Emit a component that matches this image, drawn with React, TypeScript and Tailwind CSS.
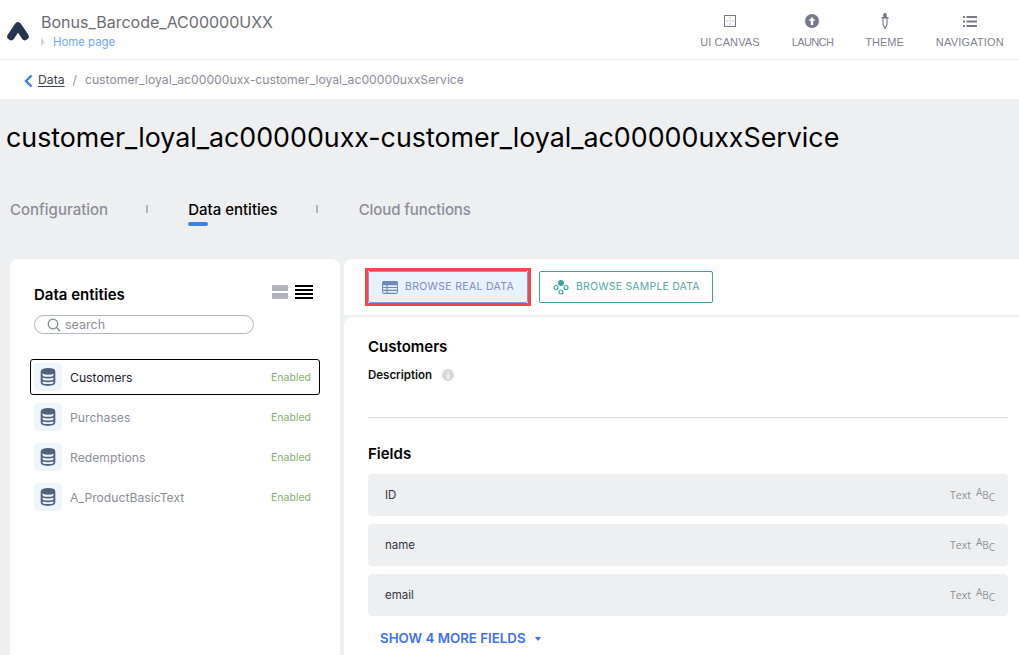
import React from "react";

const font = { fontFamily: "Inter, 'Liberation Sans', sans-serif" };

function Db() {
  return (
    <svg width="16" height="18" viewBox="0 0 16 18" fill="none" stroke="#52617c" strokeWidth="1.8">
      <ellipse cx="8" cy="3.4" rx="6.4" ry="2.4" fill="#52617c" />
      <path d="M1.6 3.4v11.2c0 1.4 2.9 2.4 6.4 2.4s6.4-1 6.4-2.4V3.4" />
      <path d="M1.6 7.2c0 1.4 2.9 2.4 6.4 2.4s6.4-1 6.4-2.4M1.6 11c0 1.4 2.9 2.4 6.4 2.4s6.4-1 6.4-2.4" />
    </svg>
  );
}

function Entity({ name, active }: { name: string; active?: boolean }) {
  return (
    <div className={`flex h-[36px] items-center rounded-[3px] border pl-[3px] pr-[8px] ${active ? "border-black" : "border-transparent"}`}>
      <div className="flex h-[28px] w-[28px] items-center justify-center rounded-[4px] bg-[#eef6fd]">
        <Db />
      </div>
      <span className={`ml-[8px] flex-1 pt-[2px] text-[12.2px] ${active ? "text-[#1c2130]" : "text-[#8b8e98]"}`}>{name}</span>
      <span className="pt-[2px] text-[10.5px] text-[#84b06a]">Enabled</span>
    </div>
  );
}

function Field({ name }: { name: string }) {
  return (
    <div className="flex h-[42px] items-center rounded-[4px] bg-[#eeeff1] pl-[17px] pr-[13px]">
      <span className="flex-1 pt-[2px] text-[11.5px] text-[#33363f]">{name}</span>
      <span className="pt-[2px] text-[10.5px] text-[#8f8f8f]" style={{ fontFamily: "'Open Sans', sans-serif" }}>Text</span>
      <span className="ml-[5px] flex items-start text-[#8f939c]" style={{ fontFamily: "'Open Sans', sans-serif" }}>
        <span className="text-[10px] leading-[12px] -translate-y-[3px]">A</span>
        <span className="text-[10px] leading-[12px]">B</span>
        <span className="text-[10px] leading-[12px] translate-y-[2px]">C</span>
      </span>
    </div>
  );
}

function NavItem({ label, icon, track }: { label: string; icon: React.ReactNode; track: string }) {
  return (
    <div className="flex flex-col items-center">
      <div className="flex h-[20px] items-center justify-center">{icon}</div>
      <span className={`mt-[5px] text-[11px] leading-[12px] text-[#7f8290] ${track}`} style={{ fontFamily: "'Liberation Sans', sans-serif" }}>{label}</span>
    </div>
  );
}

export default function App() {
  return (
    <div className="flex h-[655px] w-[1019px] flex-col overflow-hidden bg-[#eeeff1]" style={font}>
      <header className="flex h-[60px] shrink-0 items-center border-b border-[#f1f1f3] bg-white pl-[7px] pr-[15px]">
        <svg width="22" height="20" viewBox="0 0 22 20" className="mt-[3px]">
          <path d="M4 15.5 L11 5 L18 15.5" stroke="#25344f" strokeWidth="7.5" strokeLinecap="round" strokeLinejoin="round" fill="none" />
        </svg>
        <div className="ml-[12px] mt-[3px] flex flex-1 flex-col">
          <span className="text-[16px] leading-[20px] text-[#6b6d75]">Bonus_Barcode_AC00000UXX</span>
          <span className="mt-[2px] flex items-center text-[11.4px] leading-[16px] text-[#6fa8f5]">
            <span className="mr-[8px] h-0 w-0 border-y-[4px] border-l-[4px] border-y-transparent border-l-[#d2d3d6]" />
            Home page
          </span>
        </div>
        <div className="flex items-start gap-[32px]">
          <NavItem label="UI CANVAS" track="tracking-[0.1px]" icon={
            <svg width="12" height="12" viewBox="0 0 12 12" fill="none"><rect x="0.5" y="0.5" width="11" height="11" stroke="#77798a" /><g fill="#77798a"><rect x="5.5" y="2.5" width="1" height="1" /><rect x="5.5" y="5.5" width="1" height="1" /><rect x="5.5" y="8.5" width="1" height="1" /><rect x="2.5" y="5.5" width="1" height="1" /><rect x="8.5" y="5.5" width="1" height="1" /></g></svg>
          } />
          <NavItem label="LAUNCH" track="tracking-[-0.6px]" icon={
            <svg width="14" height="14" viewBox="0 0 14 14"><circle cx="7" cy="7" r="7" fill="#77798a" /><path d="M7 3l3.5 3.8H8.2V11H5.8V6.8H3.5z" fill="#fff" /></svg>
          } />
          <NavItem label="THEME" track="tracking-[0px]" icon={
            <svg width="8" height="16" viewBox="0 0 8 16" fill="none"><rect x="2.2" y="0" width="3.6" height="5" rx="1.6" fill="#77798a" /><rect x="0.5" y="4" width="7" height="1.6" fill="#77798a" /><path d="M2 5.5v6L4 15.5l2-4v-6" stroke="#77798a" strokeWidth="1.1" /></svg>
          } />
          <NavItem label="NAVIGATION" track="tracking-[0.2px]" icon={
            <svg width="14" height="11" viewBox="0 0 14 11" fill="#77798a"><rect x="0" y="0" width="2" height="2" /><rect x="3.5" y="0" width="10.5" height="2" /><rect x="0" y="4.5" width="2" height="2" /><rect x="3.5" y="4.5" width="10.5" height="2" /><rect x="0" y="9" width="2" height="2" /><rect x="3.5" y="9" width="10.5" height="2" /></svg>
          } />
        </div>
      </header>

      <nav className="flex h-[39px] shrink-0 items-center bg-white pl-[24px] pt-[2px] text-[12.2px]">
        <svg width="9" height="14" viewBox="0 0 9 14" fill="none"><path d="M7.5 1.5L2 7l5.5 5.5" stroke="#3b82e8" strokeWidth="2.4" /></svg>
        <span className="ml-[5px] text-[#3d4150] underline underline-offset-2">Data</span>
        <span className="ml-[8px] text-[#8b8e98]">/</span>
        <span className="ml-[8px] text-[#8b8e98]">customer_loyal_ac00000uxx-customer_loyal_ac00000uxxService</span>
      </nav>

      <h1 className="mt-[20px] h-[36px] shrink-0 whitespace-nowrap pl-[6px] text-[26.8px] leading-[36px] font-normal text-black">
        customer_loyal_ac00000uxx-customer_loyal_ac00000uxxService
      </h1>

      <div className="mt-[45px] flex h-[24px] shrink-0 items-start pl-[10px] text-[15px] leading-[20px] font-medium">
        <span className="text-[#8b8e98]">Configuration</span>
        <span className="ml-[38px] mt-[5px] h-[8px] w-[2px] bg-[#b3b5c0]" />
        <div className="ml-[40px] flex flex-col">
          <span className="text-black">Data entities</span>
          <span className="mt-[2px] h-[4px] w-[20px] rounded-full bg-[#3b82e8]" />
        </div>
        <span className="ml-[38px] mt-[5px] h-[8px] w-[2px] bg-[#b3b5c0]" />
        <span className="ml-[41px] tracking-[-0.1px] text-[#8b8e98]">Cloud functions</span>
      </div>

      <div className="mt-[35px] flex min-h-0 flex-1 gap-[4px] pl-[10px]">
        <aside className="w-[330px] shrink-0 rounded-t-[8px] bg-white pl-[20px] pr-[20px] pt-[24px]">
          <div className="flex h-[24px] items-start justify-between pl-[4px] pr-[7px]">
            <span className="mt-[2px] text-[15px] leading-[20px] font-semibold text-black">Data entities</span>
            <div className="mt-[2px] flex items-center gap-[7px]">
              <div className="flex flex-col gap-[2px]">
                <span className="h-[6px] w-[16px] bg-[#b0b2be]" />
                <span className="h-[6px] w-[16px] bg-[#b0b2be]" />
              </div>
              <div className="flex flex-col gap-[2px]">
                <span className="h-[2px] w-[18px] bg-black" />
                <span className="h-[2px] w-[18px] bg-black" />
                <span className="h-[2px] w-[18px] bg-black" />
                <span className="h-[2px] w-[18px] bg-black" />
              </div>
            </div>
          </div>
          <div className="ml-[4px] mt-[8px] flex h-[19px] w-[220px] items-center rounded-full border border-[#b3b5c0] pl-[12px]">
            <svg width="14" height="14" viewBox="0 0 14 14" fill="none" stroke="#80838e" strokeWidth="1.2"><circle cx="6" cy="6" r="4.8" /><path d="M9.5 9.5L13 13" /></svg>
            <span className="ml-[4px] pt-[2px] text-[12.5px] text-[#8b8e98]">search</span>
          </div>
          <div className="mt-[25px] flex flex-col gap-[4px]">
            <Entity name="Customers" active />
            <Entity name="Purchases" />
            <Entity name="Redemptions" />
            <Entity name="A_ProductBasicText" />
          </div>
        </aside>

        <main className="flex min-w-0 flex-1 flex-col gap-[2px]">
          <div className="flex h-[56px] shrink-0 items-center gap-[8px] rounded-tl-[8px] bg-white pl-[21px]">
            <div className="border-[3px] border-[#f7434a]">
              <div className="flex h-[32px] w-[160px] items-center rounded-[2px] border border-[#7f9fd3] bg-[#e8f2fd] pl-[13px]">
                <svg width="16" height="13" viewBox="0 0 16 13" fill="none" stroke="#6c89bd" strokeWidth="1.1"><rect x="0.6" y="0.6" width="14.8" height="11.8" rx="1.5" /><rect x="0.6" y="0.6" width="14.8" height="3" rx="1.5" fill="#6c89bd" /><path d="M0.6 6.5h14.8M0.6 9.4h14.8M5 3.5v9" /></svg>
                <span className="ml-[7px] whitespace-nowrap text-[10.5px] tracking-[0.32px] text-[#7b8fbb]">BROWSE REAL DATA</span>
              </div>
            </div>
            <div className="flex h-[32px] w-[174px] items-center rounded-[2px] border border-[#3aa39d] bg-white pl-[13px]">
              <svg width="16" height="15" viewBox="0 0 16 15" fill="none" stroke="#3aa39d" strokeWidth="1.2"><circle cx="8" cy="3" r="2.4" fill="#3aa39d" /><circle cx="3" cy="7.5" r="2" /><circle cx="13" cy="7.5" r="2" /><circle cx="8" cy="12" r="2" /></svg>
              <span className="ml-[7px] whitespace-nowrap text-[10.5px] tracking-[0.2px] text-[#56a8a3]">BROWSE SAMPLE DATA</span>
            </div>
          </div>
          <div className="flex-1 rounded-tl-[8px] bg-white pl-[24px] pr-[11px] pt-[20px]">
            <div className="text-[15px] leading-[20px] font-semibold text-black">Customers</div>
            <div className="mt-[9px] flex h-[18px] items-center">
              <span className="pt-[2px] text-[11.5px] font-semibold text-[#111]">Description</span>
              <span className="ml-[10px] flex h-[12px] w-[12px] items-center justify-center rounded-full bg-[#d8d9dd] text-[9px] font-bold leading-none text-white">i</span>
            </div>
            <div className="mt-[33px] h-px bg-[#d9dadd]" />
            <div className="mt-[26px] text-[15px] leading-[20px] font-semibold text-black">Fields</div>
            <div className="mt-[10px] flex flex-col gap-[8px]">
              <Field name="ID" />
              <Field name="name" />
              <Field name="email" />
            </div>
            <div className="ml-[12px] mt-[13px] flex items-center text-[13.3px] font-semibold text-[#4070f0]">
              SHOW 4 MORE FIELDS
              <span className="ml-[9px] h-0 w-0 border-x-[3.5px] border-t-[4px] border-x-transparent border-t-[#4070f0]" />
            </div>
          </div>
        </main>
      </div>
    </div>
  );
}
